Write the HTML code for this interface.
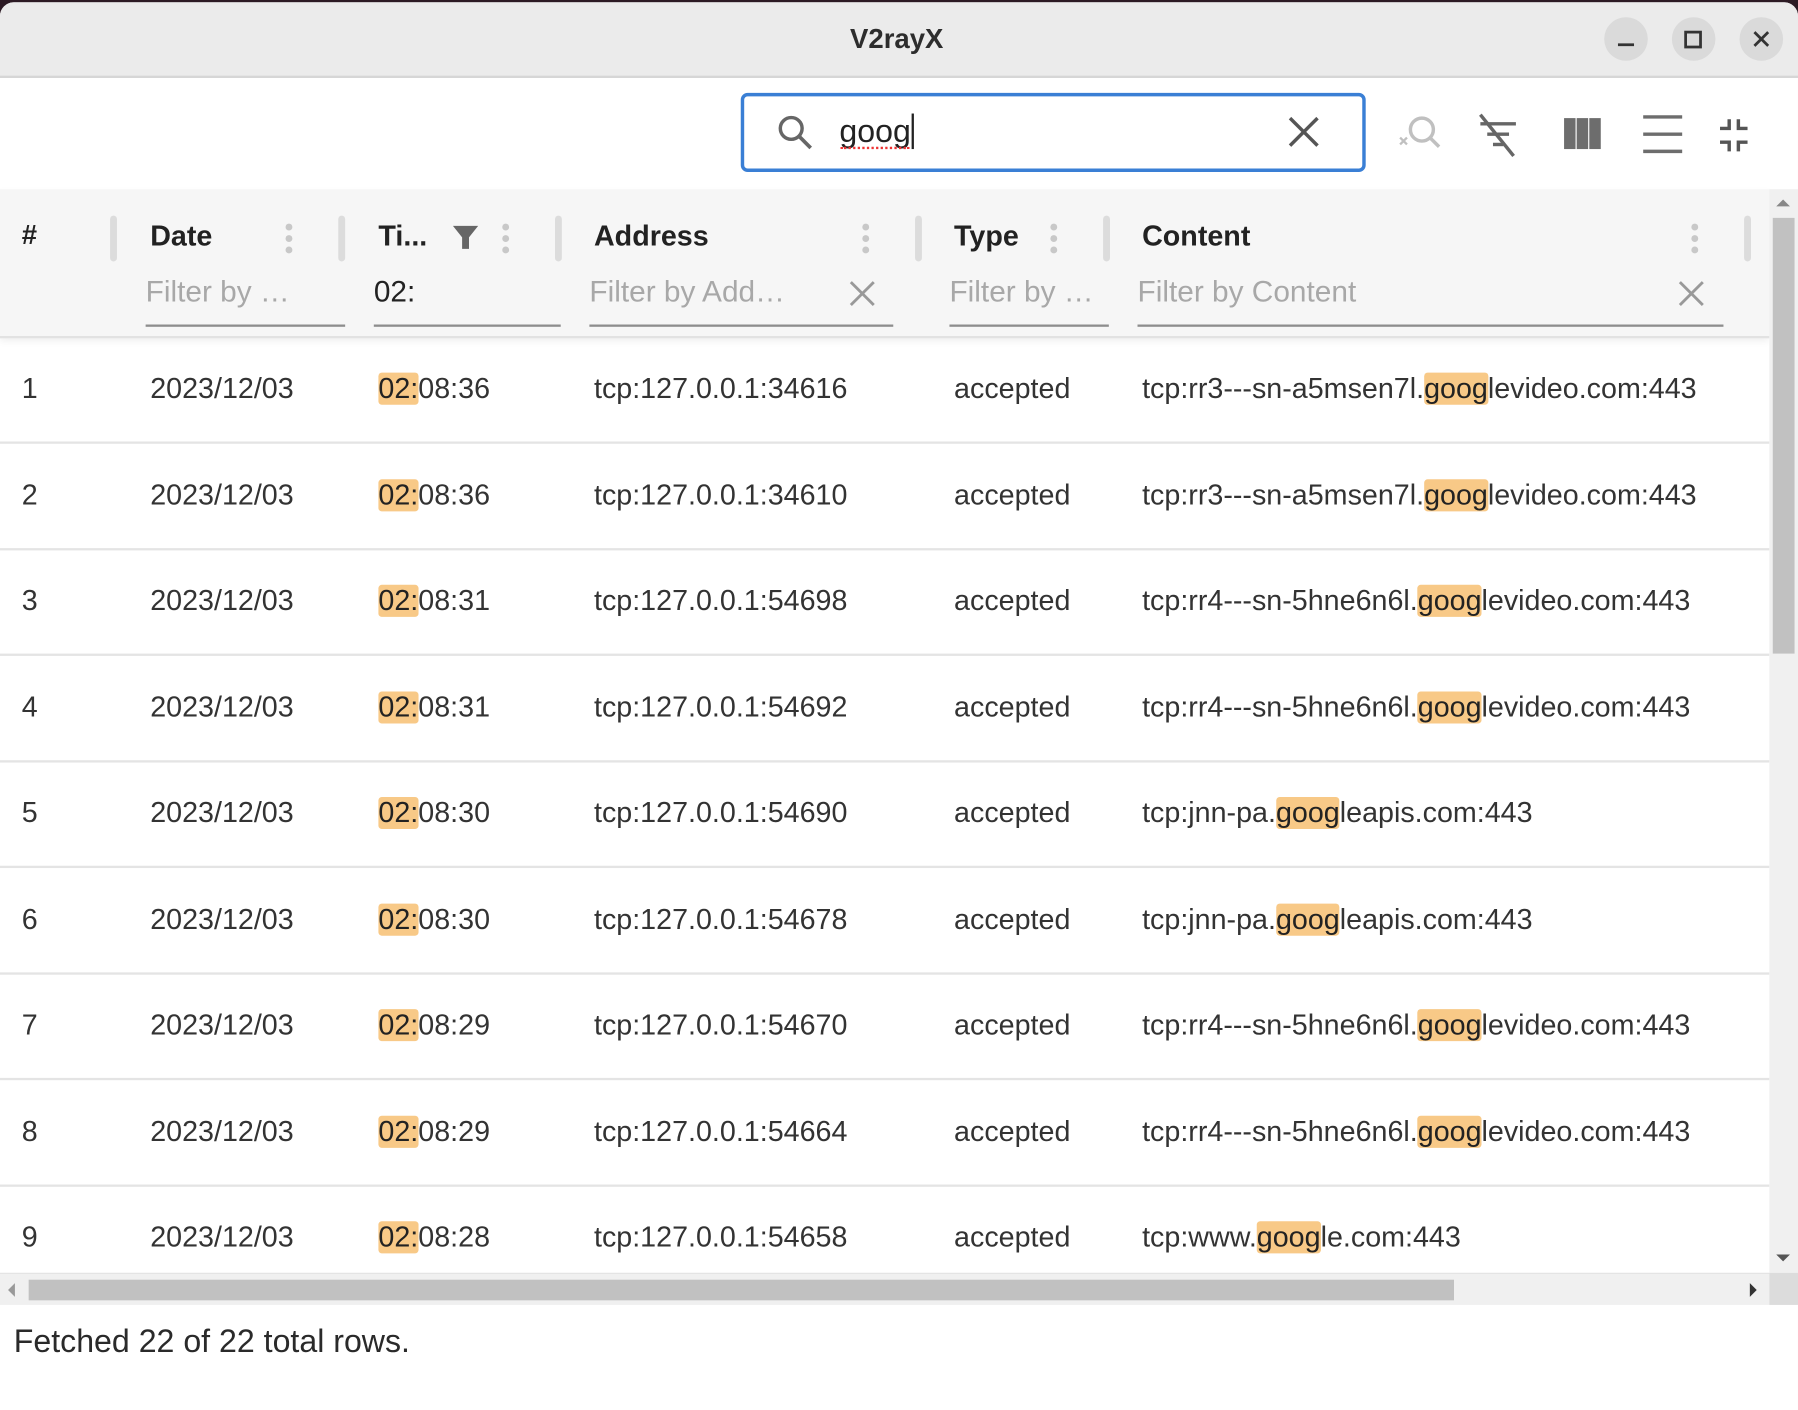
<!DOCTYPE html>
<html><head><meta charset="utf-8"><style>
html,body{margin:0;padding:0;width:1798px;height:1410px;overflow:hidden;background:#2c1a24;}
#w{position:absolute;left:0;top:0;width:1568px;height:1230px;transform:scale(1.14668);transform-origin:0 0;font-family:"Liberation Sans",sans-serif;}
.win{position:absolute;left:0;top:2px;width:1568px;height:1228px;background:#fff;border-radius:12px 12px 0 0;overflow:hidden;}
.a{position:absolute;}
.tb{left:0;top:0;width:1568px;height:64px;background:#ebebeb;border-bottom:2px solid #d6d6d6;}
.cb{width:38px;height:38px;border-radius:50%;background:#dadada;top:13px;}
.t{position:absolute;font-size:25px;color:#333;white-space:nowrap;line-height:30px;}
.h{font-weight:bold;color:#222;}
.ph{color:#a8a8a8;}
.hl{background:#f8c987;border-radius:3px;color:#222;}
.sep{position:absolute;top:186px;width:6px;height:40px;background:#dcdcdc;border-radius:3px;}
.ul{position:absolute;top:281px;height:2px;background:#8d8d8d;}
.dots{position:absolute;width:6px;}
.dots i{display:block;width:6px;height:6px;border-radius:3px;background:#c8c8c8;margin-bottom:4px;}
.rl{position:absolute;left:0;width:1543px;height:2px;background:#e4e4e4;}
</style></head><body><div id="w"><div class="win">
<div class="a tb"></div>
<div class="t h" style="left:0;width:1564px;text-align:center;top:18px;font-size:24px;color:#2d2d2d">V2rayX</div>
<div class="a cb" style="left:1399px"></div><div class="a cb" style="left:1458px"></div><div class="a cb" style="left:1517px"></div>
<svg class="a" style="left:1399px;top:13px" width="156" height="38"><g stroke="#333" stroke-width="2.4" fill="none"><line x1="12" y1="24" x2="26" y2="24"/><rect x="71" y="13" width="13" height="13"/><line x1="131" y1="13" x2="143" y2="25"/><line x1="143" y1="13" x2="131" y2="25"/></g></svg>
<div class="a" style="left:646px;top:79px;width:539px;height:63px;border:3px solid #3a7fd5;border-radius:6px;"></div>
<svg class="a" style="left:676px;top:96px" width="36" height="36"><circle cx="14" cy="14" r="9.5" stroke="#666" stroke-width="3" fill="none"/><line x1="21" y1="21" x2="31" y2="31" stroke="#666" stroke-width="3.2"/></svg>
<div class="t" style="left:732px;top:98px;font-size:28px;color:#222">goog<span style="border-left:2px solid #222;margin-left:1px"></span></div>
<div class="a" style="left:733px;top:126px;width:60px;border-bottom:2px dotted #e33;"></div>
<svg class="a" style="left:1122px;top:98px" width="30" height="30"><g stroke="#555" stroke-width="3"><line x1="3" y1="3" x2="27" y2="27"/><line x1="27" y1="3" x2="3" y2="27"/></g></svg>
<svg class="a" style="left:1215px;top:92px" width="330" height="46"><g fill="none" stroke-width="3">
<circle cx="25" cy="19" r="10" stroke="#c0c0c0"/><line x1="32" y1="26" x2="40" y2="34" stroke="#c0c0c0"/><line x1="6" y1="26" x2="12" y2="32" stroke="#c0c0c0" stroke-width="2"/><line x1="12" y1="26" x2="6" y2="32" stroke="#c0c0c0" stroke-width="2"/>
<g stroke="#666"><line x1="76" y1="14" x2="107" y2="14"/><line x1="82" y1="23" x2="101" y2="23"/><line x1="87" y1="32" x2="96" y2="32"/><line x1="76" y1="6" x2="105" y2="42"/></g>
<g fill="#6d6d6d" stroke="none"><rect x="149" y="9" width="10" height="27"/><rect x="160" y="9" width="10" height="27"/><rect x="171" y="9" width="10" height="27"/></g>
<g stroke="#6d6d6d"><line x1="218" y1="8" x2="252" y2="8"/><line x1="218" y1="23" x2="252" y2="23"/><line x1="218" y1="38" x2="252" y2="38"/></g>
<g stroke="#555"><path d="M293 10v8h-8M301 10v8h8M293 38v-8h-8M301 38v-8h8"/></g>
</g></svg>
<div class="a" style="left:0;top:163px;width:1543px;height:128px;background:#f6f6f6;border-bottom:2px solid #e2e2e2;box-shadow:0 3px 6px rgba(0,0,0,0.06)"></div>
<div class="t h" style="left:19px;top:189px;font-size:24px">#</div>
<div class="t h" style="left:131px;top:189px">Date</div>
<div class="t h" style="left:330px;top:189px">Ti...</div>
<div class="t h" style="left:518px;top:189px">Address</div>
<div class="t h" style="left:832px;top:189px">Type</div>
<div class="t h" style="left:996px;top:189px">Content</div>
<svg class="a" style="left:394px;top:193px" width="24" height="24"><path d="M1 2h22l-8 10v10h-6v-10z" fill="#666"/></svg>
<div class="dots" style="left:249px;top:193px"><i></i><i></i><i></i></div>
<div class="dots" style="left:438px;top:193px"><i></i><i></i><i></i></div>
<div class="dots" style="left:752px;top:193px"><i></i><i></i><i></i></div>
<div class="dots" style="left:916px;top:193px"><i></i><i></i><i></i></div>
<div class="dots" style="left:1475px;top:193px"><i></i><i></i><i></i></div>
<div class="sep" style="left:96px"></div><div class="sep" style="left:295px"></div><div class="sep" style="left:484px"></div><div class="sep" style="left:798px"></div><div class="sep" style="left:962px"></div><div class="sep" style="left:1521px"></div>
<div class="t ph" style="left:127px;top:237px;font-size:26px">Filter by …</div>
<div class="t" style="left:326px;top:237px;font-size:26px;color:#222">02:</div>
<div class="t ph" style="left:514px;top:237px;font-size:26px">Filter by Add…</div>
<div class="t ph" style="left:828px;top:237px;font-size:26px">Filter by …</div>
<div class="t ph" style="left:992px;top:237px;font-size:26px">Filter by Content</div>
<svg class="a" style="left:740px;top:242px" width="24" height="24"><g stroke="#999" stroke-width="2.5"><line x1="2" y1="2" x2="22" y2="22"/><line x1="22" y1="2" x2="2" y2="22"/></g></svg>
<svg class="a" style="left:1463px;top:242px" width="24" height="24"><g stroke="#999" stroke-width="2.5"><line x1="2" y1="2" x2="22" y2="22"/><line x1="22" y1="2" x2="2" y2="22"/></g></svg>
<div class="ul" style="left:127px;width:174px"></div><div class="ul" style="left:326px;width:163px"></div><div class="ul" style="left:514px;width:265px"></div><div class="ul" style="left:828px;width:139px"></div><div class="ul" style="left:992px;width:511px"></div>
<div id="rows"></div>
<script>
var d=[["1","08:36","34616","tcp:rr3---sn-a5msen7l.","levideo.com:443"],["2","08:36","34610","tcp:rr3---sn-a5msen7l.","levideo.com:443"],["3","08:31","54698","tcp:rr4---sn-5hne6n6l.","levideo.com:443"],["4","08:31","54692","tcp:rr4---sn-5hne6n6l.","levideo.com:443"],["5","08:30","54690","tcp:jnn-pa.","leapis.com:443"],["6","08:30","54678","tcp:jnn-pa.","leapis.com:443"],["7","08:29","54670","tcp:rr4---sn-5hne6n6l.","levideo.com:443"],["8","08:29","54664","tcp:rr4---sn-5hne6n6l.","levideo.com:443"],["9","08:28","54658","tcp:www.","le.com:443"]];
var h="";d.forEach(function(r,i){var y=322+i*92.5;
h+='<div class="t" style="left:19px;top:'+y+'px">'+r[0]+'</div><div class="t" style="left:131px;top:'+y+'px">2023/12/03</div><div class="t" style="left:330px;top:'+y+'px"><span class="hl">02:</span>'+r[1]+'</div><div class="t" style="left:518px;top:'+y+'px">tcp:127.0.0.1:'+r[2]+'</div><div class="t" style="left:832px;top:'+y+'px">accepted</div><div class="t" style="left:996px;top:'+y+'px">'+r[3]+'<span class="hl">goog</span>'+r[4]+'</div>';
if(i<8)h+='<div class="rl" style="top:'+(383+i*92.5)+'px"></div>';});
document.getElementById("rows").innerHTML=h;
</script>
<div class="a" style="left:1543px;top:163px;width:25px;height:945px;background:#f0f0f0"></div>
<div class="a" style="left:1546px;top:188px;width:19px;height:380px;background:#c1c1c1"></div>
<svg class="a" style="left:1547px;top:170px" width="16" height="10"><path d="M2 8L8 2L14 8z" fill="#888"/></svg>
<svg class="a" style="left:1547px;top:1090px" width="16" height="10"><path d="M2 2L8 8L14 2z" fill="#555"/></svg>
<div class="a" style="left:0;top:1108px;width:1543px;height:27px;background:#f0f0f0;border-top:1px solid #e4e4e4"></div>
<div class="a" style="left:25px;top:1114px;width:1243px;height:18px;background:#c1c1c1"></div>
<svg class="a" style="left:4px;top:1115px" width="12" height="16"><path d="M9 2L3 8L9 14z" fill="#999"/></svg>
<svg class="a" style="left:1523px;top:1115px" width="12" height="16"><path d="M3 2L9 8L3 14z" fill="#333"/></svg>
<div class="a" style="left:1543px;top:1108px;width:25px;height:28px;background:#dcdcdc"></div>
<div class="t" style="left:12px;top:1153px;font-size:28px;color:#2a2a2a">Fetched 22 of 22 total rows.</div>
</div></div></body></html>
